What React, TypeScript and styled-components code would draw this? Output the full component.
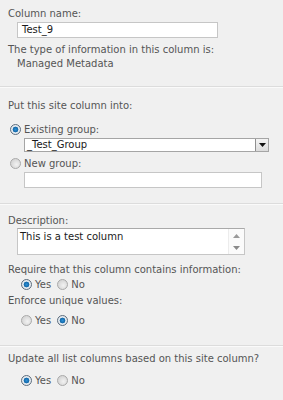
import styled, { createGlobalStyle } from 'styled-components';

const GlobalStyle = createGlobalStyle`
  html, body {
    margin: 0;
    padding: 0;
    background: #f0f0f0;
  }
  body {
    font-family: 'DejaVu Sans', Verdana, sans-serif;
    font-size: 10px;
    color: #555;
  }
`;

const Page = styled.div`
  width: 283px;
  height: 400px;
  overflow: hidden;
  background: #f0f0f0;
`;

const Section = styled.section<{ $top: number; $bottom: number }>`
  padding: ${(p) => p.$top}px 0 ${(p) => p.$bottom}px 8px;
  border-bottom: 1px solid #dcdcdc;
  box-shadow: 0 1px 0 #fafafa;

  &:last-child {
    border-bottom: none;
    box-shadow: none;
  }
`;

const Label = styled.div<{ $mt?: number; $indent?: number }>`
  line-height: 14px;
  margin-top: ${(p) => p.$mt ?? 0}px;
  padding-left: ${(p) => p.$indent ?? 0}px;
  white-space: nowrap;
`;

const TextBox = styled.div<{ $width: number; $left: number; $mt: number }>`
  box-sizing: border-box;
  width: ${(p) => p.$width}px;
  height: 16px;
  margin: ${(p) => p.$mt}px 0 0 ${(p) => p.$left}px;
  background: #fff;
  border: 1px solid #c6c6c6;
  padding: 0 4px;
  line-height: 14px;
  color: #1a1a1a;
`;

const Select = styled.div`
  box-sizing: border-box;
  display: flex;
  align-items: center;
  width: 245px;
  height: 14px;
  margin: 2px 0 0 16px;
  background: #fff;
  border: 1px solid #a5a5a5;
  color: #1a1a1a;
  line-height: 12px;
`;

const SelectText = styled.span`
  flex: 1;
  padding-left: 2px;
`;

const SelectButton = styled.span`
  box-sizing: border-box;
  width: 13px;
  height: 12px;
  display: flex;
  align-items: center;
  justify-content: center;
  background: linear-gradient(#f4f4f4, #dcdcdc);
  border-left: 1px solid #8f8f8f;
`;

const TextArea = styled.div`
  box-sizing: border-box;
  display: flex;
  width: 228px;
  height: 27px;
  margin: 0 0 0 9px;
  background: #fff;
  border: 1px solid #c6c6c6;
  border-top-color: #a9a9a9;
  color: #1a1a1a;
`;

const AreaText = styled.div`
  flex: 1;
  padding: 1px 2px;
  line-height: 14px;
`;

const ScrollBar = styled.div`
  width: 15px;
  display: flex;
  flex-direction: column;
  justify-content: space-between;
  align-items: center;
  padding: 5px 0 4px;
  background: #fbfbfb;
  border-left: 1px solid #ececec;
`;

const RadioRow = styled.div<{ $mt: number; $indent: number }>`
  display: flex;
  align-items: center;
  gap: 6px;
  height: 14px;
  margin-top: ${(p) => p.$mt}px;
  padding-left: ${(p) => p.$indent}px;
`;

const Option = styled.label`
  display: flex;
  align-items: center;
  gap: 3px;
  white-space: nowrap;
`;

const Dot = styled.span<{ $on?: boolean }>`
  box-sizing: border-box;
  width: 11px;
  height: 11px;
  border-radius: 50%;
  border: 1px solid ${(p) => (p.$on ? '#5d6d7d' : '#a9a9a9')};
  background: ${(p) =>
    p.$on
      ? 'radial-gradient(circle, #2a8fd6 0, #1568a8 2.6px, #e8eef3 3.2px, #dfe4ea 5px)'
      : 'radial-gradient(circle at 60% 60%, #f2f2f2 0, #d8d8d8 5px)'};
`;

const Radio = ({ on, label }: { on?: boolean; label: string }) => (
  <Option>
    <Dot $on={on} />
    {label}
  </Option>
);

const Arrow = ({ up }: { up?: boolean }) => (
  <svg width="7" height="4" viewBox="0 0 7 4">
    <path d={up ? 'M0 4 L3.5 0 L7 4 Z' : 'M0 0 L7 0 L3.5 4 Z'} fill={up ? '#9a9a9a' : '#8a8a8a'} />
  </svg>
);

const App = () => {
  return (
    <Page>
      <GlobalStyle />
      <Section $top={7} $bottom={15}>
        <Label>Column name:</Label>
        <TextBox $width={201} $left={9} $mt={1}>Test_9</TextBox>
        <Label $mt={5}>The type of information in this column is:</Label>
        <Label $indent={9}>Managed Metadata</Label>
      </Section>

      <Section $top={12} $bottom={15}>
        <Label>Put this site column into:</Label>
        <RadioRow $mt={9} $indent={2}>
          <Radio on label="Existing group:" />
        </RadioRow>
        <Select>
          <SelectText>_Test_Group</SelectText>
          <SelectButton>
            <svg width="7" height="4" viewBox="0 0 7 4">
              <path d="M0 0 L7 0 L3.5 4 Z" fill="#111" />
            </svg>
          </SelectButton>
        </Select>
        <RadioRow $mt={4} $indent={2}>
          <Radio label="New group:" />
        </RadioRow>
        <TextBox $width={238} $left={16} $mt={2} />
      </Section>

      <Section $top={10} $bottom={18}>
        <Label>Description:</Label>
        <TextArea>
          <AreaText>This is a test column</AreaText>
          <ScrollBar>
            <Arrow up />
            <Arrow />
          </ScrollBar>
        </TextArea>
        <Label $mt={8}>Require that this column contains information:</Label>
        <RadioRow $mt={0} $indent={13}>
          <Radio on label="Yes" />
          <Radio label="No" />
        </RadioRow>
        <Label $mt={3}>Enforce unique values:</Label>
        <RadioRow $mt={5} $indent={13}>
          <Radio label="Yes" />
          <Radio on label="No" />
        </RadioRow>
      </Section>

      <Section $top={6} $bottom={0}>
        <Label>Update all list columns based on this site column?</Label>
        <RadioRow $mt={7} $indent={13}>
          <Radio on label="Yes" />
          <Radio label="No" />
        </RadioRow>
      </Section>
    </Page>
  );
};

export default App;
